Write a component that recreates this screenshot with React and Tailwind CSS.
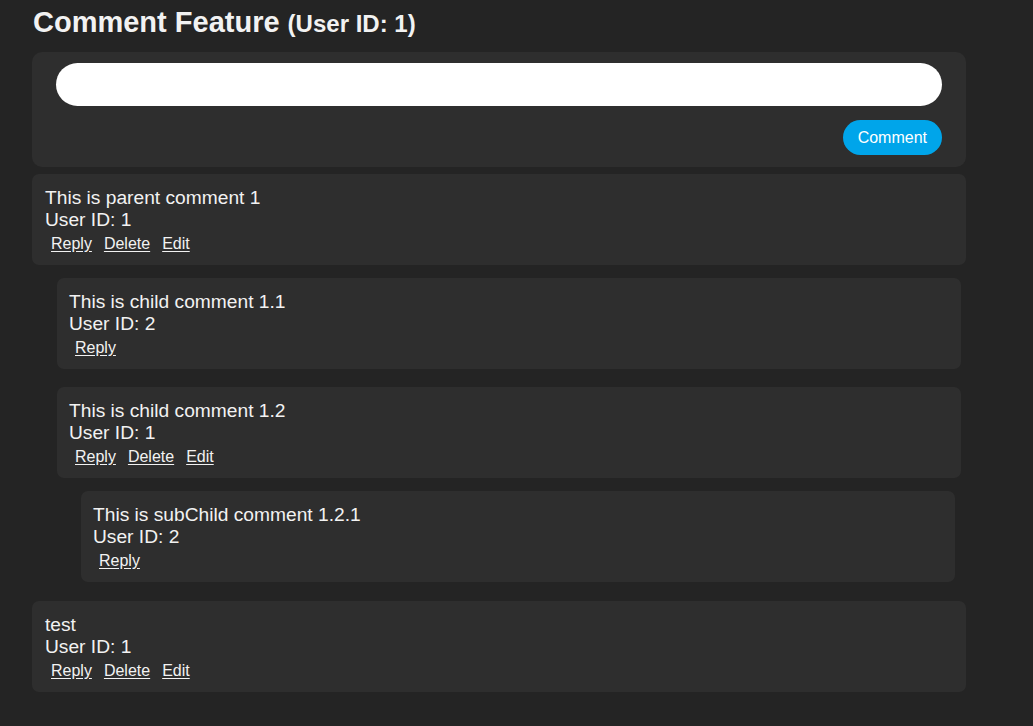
import React from 'react'

const font = { fontFamily: '"Liberation Sans", Arial, sans-serif' }

const Actions = ({ own }) => (
  <div className="flex text-[16px] leading-[18px] mt-[2px] py-[2px]">
    <button className="px-[6px] underline underline-offset-2">Reply</button>
    {own && (
      <>
        <button className="px-[6px] underline underline-offset-2">Delete</button>
        <button className="px-[6px] underline underline-offset-2">Edit</button>
      </>
    )}
  </div>
)

const Card = ({ text, userId, className, nested }) => (
  <div
    className={`bg-[#2e2e2e] rounded-[7px] pt-[13px] h-[91px] ${nested ? 'px-[12px]' : 'px-[13px]'} ${className}`}
  >
    <p className="text-[19.2px] leading-[22px]">{text}</p>
    <p className="text-[19.2px] leading-[22px]">User ID: {userId}</p>
    <Actions own={userId === 1} />
  </div>
)

const App = () => {
  return (
    <div className="min-h-screen bg-[#242424] text-[#f2f2f2]" style={font}>
      <div className="ml-[32px] w-[934px] pt-[6px] flex flex-col">
        <h1 className="font-bold text-[29px] leading-[33px] pl-[1px]">
          Comment Feature <span className="text-[24px]">(User ID: 1)</span>
        </h1>

        <div className="mt-[12px] bg-[#2e2e2e] rounded-[10px] px-[24px] pt-[11px] pb-[12px] flex flex-col">
          <input className="h-[43px] w-full bg-white rounded-full px-5 text-black outline-none" />
          <div className="flex justify-end mt-[14px]">
            <button className="h-[35px] px-[15px] rounded-full bg-[#00a5ea] text-white text-[16px]">
              Comment
            </button>
          </div>
        </div>

        <Card className="mt-[7px]" text="This is parent comment 1" userId={1} />
        <div className="ml-[25px] mr-[5px] flex flex-col">
          <Card nested className="mt-[13px]" text="This is child comment 1.1" userId={2} />
          <Card nested className="mt-[18px]" text="This is child comment 1.2" userId={1} />
          <div className="ml-[24px] mr-[6px] flex flex-col">
            <Card nested className="mt-[13px]" text="This is subChild comment 1.2.1" userId={2} />
          </div>
        </div>
        <Card className="mt-[19px]" text="test" userId={1} />
      </div>
    </div>
  )
}

export default App
